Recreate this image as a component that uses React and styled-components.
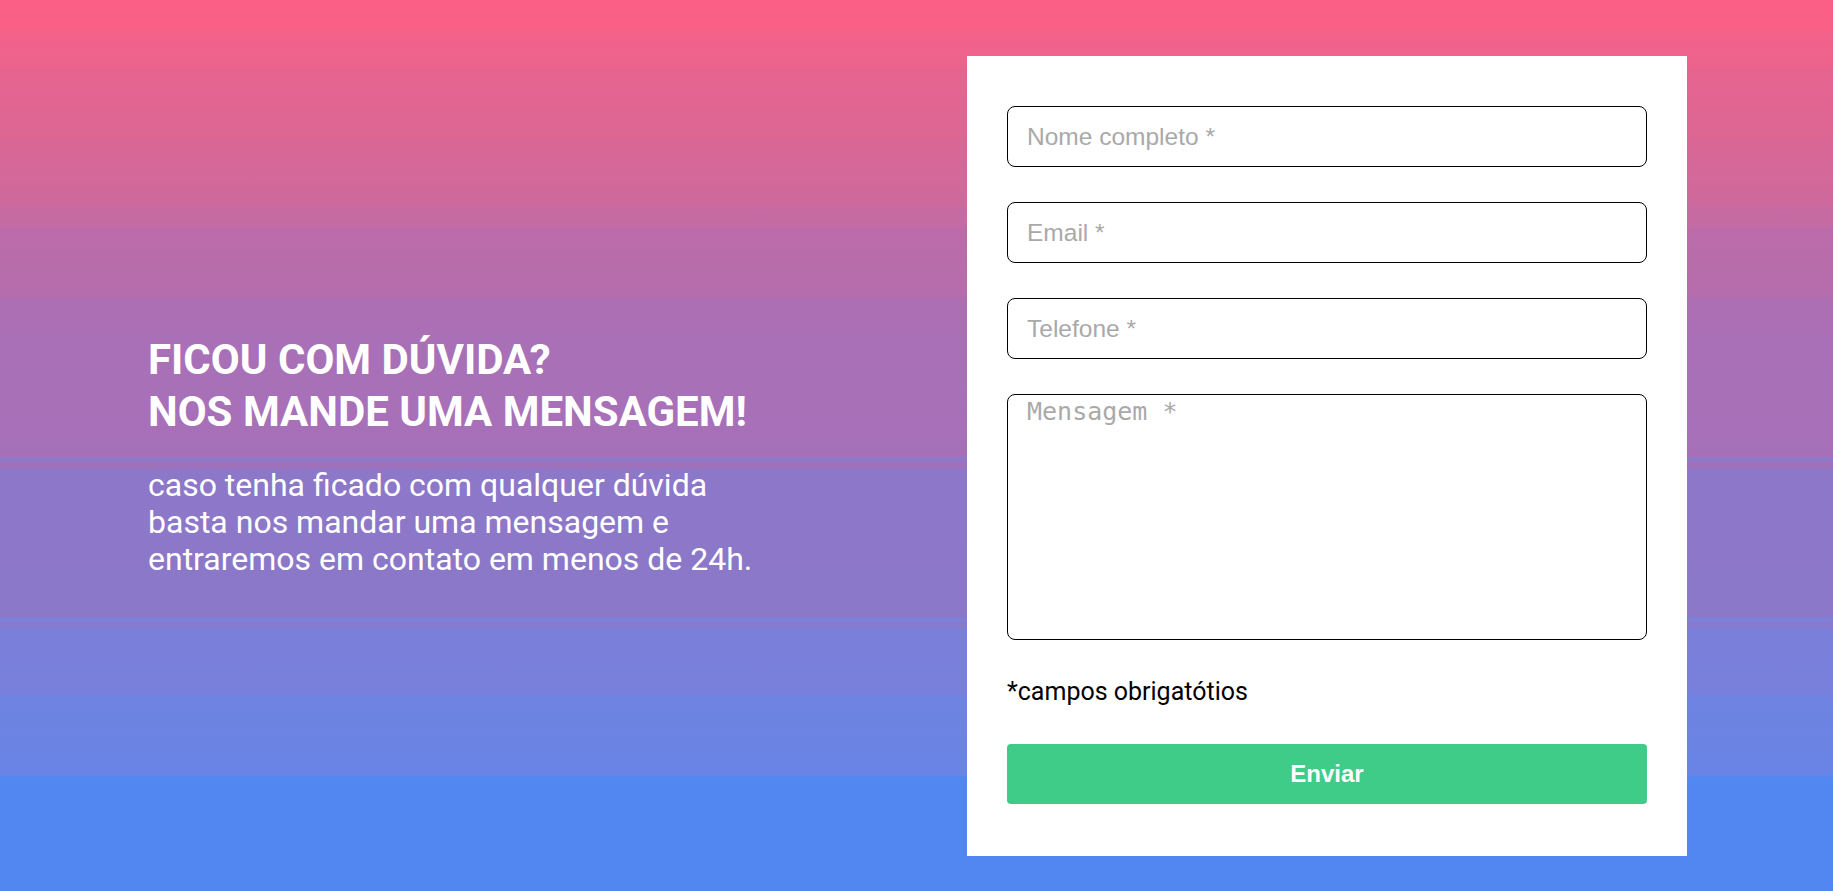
import React from 'react'
import styled, { createGlobalStyle } from 'styled-components';

const GlobalStyle = createGlobalStyle`
  * { box-sizing: border-box; }
  html, body { margin: 0; padding: 0; }
  body { font-family: Roboto, "Liberation Sans", sans-serif; }
`;

const Section = styled.section`
  min-height: 100vh;
  display: flex;
  align-items: center;
  justify-content: space-between;
  padding: 56px 146px 35px 148px;
  background: linear-gradient(
    to bottom,
    #fb5f85 0px, #fa5f86 30px,
    #f3618a 32px, #ec638c 66px,
    #e6648f 68px, #dc6693 139px,
    #d96796 141px, #cf699c 204px,
    #c96aa1 206px, #c56ba4 226px,
    #bc6ba8 228px, #b46dad 296px,
    #ae6eb2 298px, #aa6fb5 336px,
    #a970b7 338px, #a670b8 457px,
    #8b79cc 458px, #8b79cc 461px,
    #a070bb 462px, #a070bb 468px,
    #8d77c8 469px, #8b78c9 617px,
    #7c80da 618px, #7c80da 621px,
    #867bcd 622px, #867bcd 627px,
    #7b7fd9 628px, #7780dc 694px,
    #6f83e1 696px, #6884e5 775px,
    #5287f1 777px, #5287f1 100%
  );
`;

const Intro = styled.div`
  display: flex;
  flex-direction: column;
  color: #fff;
`;

const Title = styled.h2`
  margin: 0 0 29px;
  font-family: Roboto, sans-serif;
  font-weight: 700;
  font-size: 42px;
  line-height: 52px;
  text-transform: uppercase;
`;

const Lead = styled.p`
  margin: 0;
  font-family: Roboto, sans-serif;
  font-size: 32px;
  line-height: 36.8px;
`;

const Card = styled.form`
  width: 720px;
  background: #fff;
  padding: 50px 40px 52px;
  display: flex;
  flex-direction: column;
  gap: 35px;
`;

const Field = styled.input`
  height: 61px;
  width: 100%;
  border: 1px solid #000;
  border-radius: 8px;
  padding: 0 19px;
  font-family: "Liberation Sans", Arial, sans-serif;
  font-size: 24.5px;
  outline: none;
  &::placeholder { color: #a9a9a9; }
`;

const Message = styled.textarea`
  height: 246px;
  width: 100%;
  border: 1px solid #000;
  border-radius: 8px;
  padding: 2px 19px;
  resize: none;
  font-family: "DejaVu Sans Mono", monospace;
  font-size: 25px;
  outline: none;
  &::placeholder { color: #a9a9a9; }
`;

const Note = styled.p`
  margin: 2px 0 3px;
  font-family: Roboto, sans-serif;
  font-size: 25px;
  color: #000;
`;

const Submit = styled.button`
  height: 60px;
  border: none;
  border-radius: 4px;
  background: #3ecc88;
  color: #fff;
  font-family: "Liberation Sans", Arial, sans-serif;
  font-weight: 700;
  font-size: 24px;
  cursor: pointer;
`;

const App = () => {
  return (
    <>
      <GlobalStyle />
      <Section>
        <Intro>
          <Title>Ficou com dúvida?<br />Nos mande uma mensagem!</Title>
          <Lead>
            caso tenha ficado com qualquer dúvida<br />
            basta nos mandar uma mensagem e<br />
            entraremos em contato em menos de 24h.
          </Lead>
        </Intro>
        <Card onSubmit={(e) => e.preventDefault()}>
          <Field type="text" placeholder="Nome completo *" />
          <Field type="email" placeholder="Email *" />
          <Field type="tel" placeholder="Telefone *" />
          <Message placeholder="Mensagem *" />
          <Note>*campos obrigatótios</Note>
          <Submit type="submit">Enviar</Submit>
        </Card>
      </Section>
    </>
  )
}

export default App
